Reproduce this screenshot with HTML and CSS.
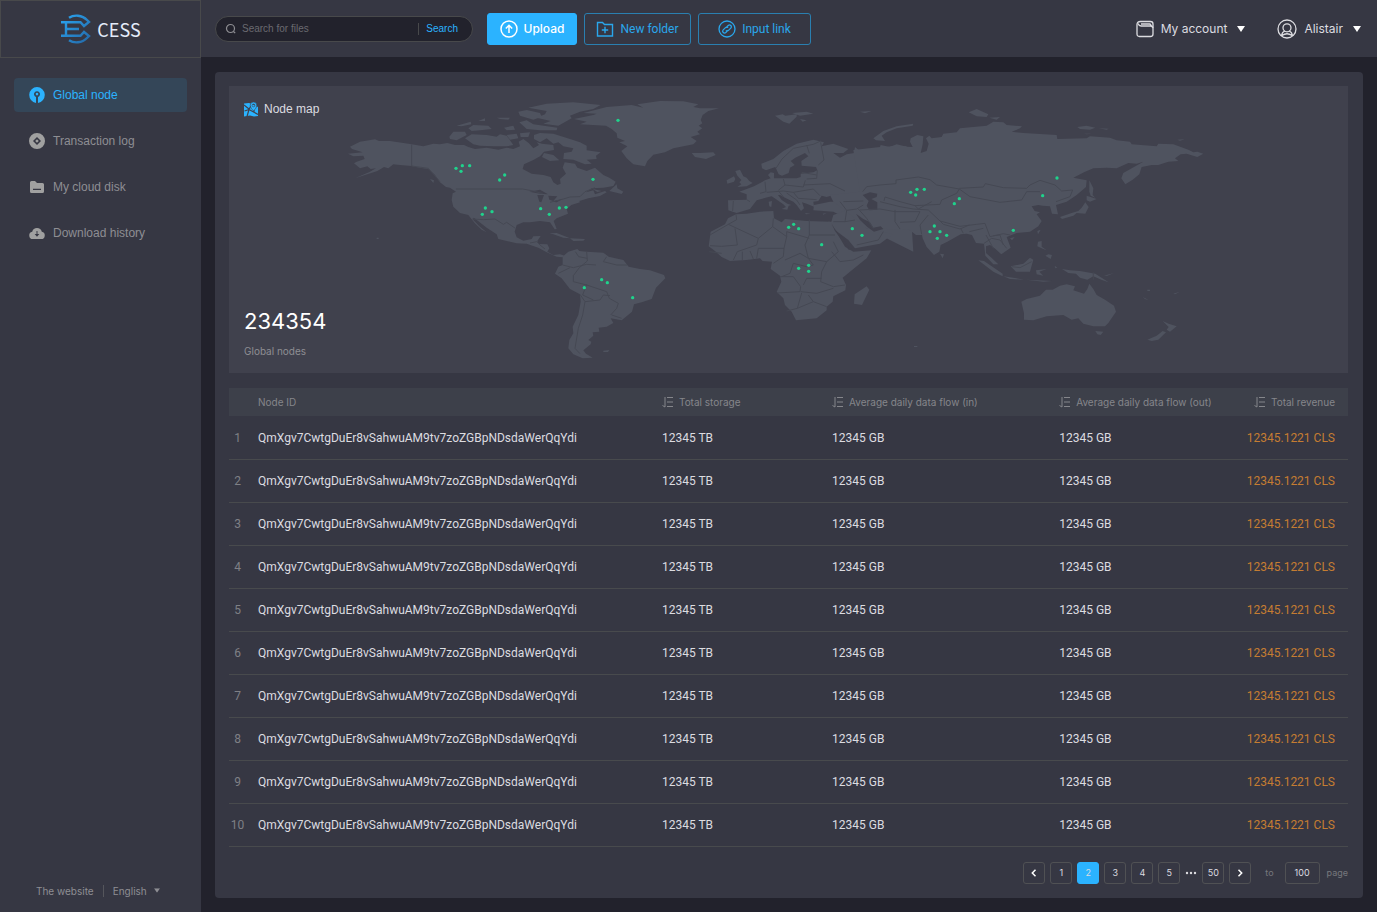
FILE: index.html
```html
<!DOCTYPE html>
<html lang="en">
<head>
<meta charset="utf-8">
<meta name="viewport" content="width=device-width, initial-scale=1">
<title>CESS</title>
<link rel="stylesheet" href="styles.css">
</head>
<body>
<svg class="defs" aria-hidden="true">
  <symbol id="sort" viewBox="0 0 12 12"><path d="M3 1v10L.5 9.500M5 1.500h6M5 6h6M5 10.500h6" fill="none" stroke="currentColor"/></symbol>
  <symbol id="caret" viewBox="0 0 8 6"><path d="M0 0h8L4 6z" fill="currentColor"/></symbol>
  <linearGradient id="logo-fill" x1="0" y1="0" x2="1" y2="1"><stop offset="0" stop-color="#2aa6f2"/><stop offset="1" stop-color="#2469a8"/></linearGradient>
</svg>
<div class="app">
  <aside class="sidebar">
    <a class="brand" href="#">
      <svg class="brand-logo" viewBox="0 0 31 30" aria-hidden="true"><g fill="none" stroke="url(#logo-fill)" stroke-width="2.400"><path d="M9 3.800C14 .5 22 .8 27 6l2 2-5 4-3.500-3.700H1M9 26.200c5 3.300 13 3 18-2.200l2-2-5-4-3.500 3.700H1M6 8v14M6 15h13"/></g></svg>
      <span>CESS</span>
    </a>
    <nav class="nav">
      <a class="nav-item active" href="#"><svg viewBox="0 0 16 16"><path fill="currentColor" fill-rule="evenodd" d="M8 0a8 8 0 0 1 1 15.900V10a3 3 0 1 0-2 0v5.900A8 8 0 0 1 8 0zM8 5.800a1.300 1.300 0 1 1 0 2.600 1.300 1.300 0 0 1 0-2.600z"/></svg>Global node</a>
      <a class="nav-item" href="#"><svg viewBox="0 0 16 16"><path fill="currentColor" fill-rule="evenodd" d="M8 0a8 8 0 1 1 0 16A8 8 0 0 1 8 0zM8 4L4 8l4 4 4-4zM8 6.200L9.800 8 8 9.800 6.200 8z"/></svg>Transaction log</a>
      <a class="nav-item" href="#"><svg viewBox="0 0 16 16"><path fill="currentColor" fill-rule="evenodd" d="M2.500 2H6l2 2h5.500Q15 4 15 5.500v7q0 1.500-1.500 1.500h-11Q1 14 1 12.500v-9Q1 2 2.500 2zM4 9.800V11h8V9.800z"/></svg>My cloud disk</a>
      <a class="nav-item" href="#"><svg viewBox="0 0 17 14"><path fill="currentColor" fill-rule="evenodd" d="M4 13.500a4 4 0 0 1-.6-7.900 5.300 5.300 0 0 1 10.200 0 4 4 0 0 1-.6 7.900zM8 5v3H6l2.500 3L11 8H9V5z"/></svg>Download history</a>
    </nav>
    <div class="side-foot">
      <a href="#">The website</a>
      <span class="rule"></span>
      <label class="lang"><select aria-label="Language"><option>English</option></select><svg viewBox="0 0 8 6"><use href="#caret"/></svg></label>
    </div>
  </aside>

  <header class="topbar">
    <form class="search">
      <svg viewBox="0 0 12 12"><g fill="none" stroke="currentColor" stroke-width="1.200"><circle cx="5.500" cy="5.500" r="4"/><path d="M8.500 8.500l1.700 1.700"/></g></svg>
      <input type="search" placeholder="Search for files" aria-label="Search for files">
      <button type="button">Search</button>
    </form>
    <div class="actions">
      <button class="btn primary"><svg viewBox="0 0 18 18"><g fill="none" stroke="currentColor" stroke-width="1.500"><circle cx="9" cy="9" r="8"/><path d="M9 13V5.500M5.800 8.500L9 5.300l3.200 3.200"/></g></svg>Upload</button>
      <button class="btn folder"><svg viewBox="0 0 18 18"><g fill="none" stroke="currentColor" stroke-width="1.400"><path d="M1.500 2.500h5l2 2h8v11.500h-15zM9 6.800v6.400M5.800 10h6.400"/></g></svg>New folder</button>
      <button class="btn link"><svg viewBox="0 0 18 18"><g fill="none" stroke="currentColor" stroke-width="1.300"><circle cx="9" cy="9" r="8"/><path d="M8 7.800l2.200-2.300a1.800 1.800 0 0 1 2.600 2.600l-2.300 2.300a1.800 1.800 0 0 1-2.600 0M10 10.200l-2.200 2.300a1.800 1.800 0 0 1-2.600-2.600l2.300-2.300a1.800 1.800 0 0 1 2.600 0"/></g></svg>Input link</button>
    </div>
    <div class="account">
      <button class="menu"><svg class="wallet" viewBox="0 0 18 18"><g fill="none" stroke="currentColor" stroke-width="1.300"><path d="M4.500 1.500h10Q17 1.500 17 4v10q0 2.500-2.500 2.500h-11Q1 16.500 1 14V4.500Q1 1.500 4.500 1.500z"/><path d="M2 3.500Q3 6 5 6h9.500q2 0 2.500 2M5 4h9l1.500 2" /></g></svg>My account<svg class="caret" viewBox="0 0 8 6"><use href="#caret"/></svg></button>
      <button class="menu"><svg class="user" viewBox="0 0 20 20"><g fill="none" stroke="currentColor" stroke-width="1.300"><circle cx="10" cy="10" r="9"/><circle cx="10" cy="8.800" r="4"/><path d="M4.500 17c.3-2.500 1.600-4.400 3.400-4.900M15.500 17c-.3-2.500-1.600-4.400-3.400-4.900M5 16.500q5-3.500 10 0"/></g></svg>Alistair<svg class="caret" viewBox="0 0 8 6"><use href="#caret"/></svg></button>
    </div>
  </header>

  <main class="main">
    <div class="panel">
      <section class="map-card">
        <svg class="map" viewBox="0 0 1119 287" aria-hidden="true">
          <g transform="translate(111 -1) scale(.33333)">
            <g class="land">
              <path d="M30 185L60 170 105 163 117 168 150 168 215 178 250 184 280 176 300 178 322 174 345 180 372 180 385 186 405 192 440 188 475 194 500 188 520 192 540 184 536 170 550 162 566 174 580 190 597 180 590 172 606 176 640 180 642 195 612 200 600 214 580 225 552 238 548 252 575 266 610 270 632 276 640 292 652 300 662 296 660 282 678 266 668 248 674 232 705 236 712 248 740 258 765 248 790 270 808 278 827 290 820 303 790 308 755 310 738 322 760 316 765 328 795 318 800 322 780 333 745 340 718 348 720 352 694 360 680 372 684 386 650 400 641 408 650 432 644 433 630 412 600 408 570 412 550 412 530 420 524 440 530 457 550 467 575 462 580 454 602 453 592 468 595 477 622 478 628 490 622 500 640 510 660 508 674 512 668 517 650 515 620 502 595 488 560 476 530 475 475 462 470 448 440 428 402 398 397 402 418 424 440 442 425 434 404 414 385 390 360 384 340 365 335 345 338 325 348 320 330 308 318 306 300 292 285 270 265 252 240 248 215 243 180 240 160 238 145 250 132 246 112 258 45 280 90 260 108 250 92 252 82 244 60 250 42 235 50 230 74 222 70 212 40 214 24 206 68 202 36 192Z"/>
              <path d="M328 155L340 140 375 140 380 150 350 166 330 162ZM350 122L392 110 394 118 365 124ZM375 160L395 148 440 150 470 155 480 148 500 152 520 180 500 184 460 184 420 182 400 178ZM385 130L400 120 445 122 455 132 420 136 395 138ZM470 98L510 98 505 104 480 102ZM492 128L520 122 525 134 500 136ZM500 150L530 146 535 160 510 164ZM415 108L435 100 435 108ZM535 80L560 75 600 84 605 95 580 104 540 92ZM565 68L620 56 700 52 782 60 760 72 720 80 690 92 695 100 655 122 610 116 632 108 590 98 615 88 620 78ZM538 112L560 106 580 118 652 128 650 136 600 136 560 132ZM540 145L570 142 565 156 542 156ZM582 150L600 144 640 146 690 162 720 172 740 182 740 196 782 202 768 212 770 222 740 224 755 236 735 238 700 224 670 222 672 204 695 200 700 190 670 184 655 172 640 176 620 160 600 172 582 162ZM612 204L640 210 658 226 630 228 606 216ZM808 318L830 298 832 310 850 320 845 327ZM758 312L785 318 772 321ZM270 282L282 286 280 294ZM628 445L650 444 690 460 670 458 640 448ZM690 460L735 462 730 467 700 468ZM110 458h6v4h-6ZM790 797L808 795 804 801 790 801Z"/>
              <path d="M668 540L668 515 685 500 712 492 718 498 740 500 790 503 806 515 850 525 866 545 900 552 930 556 972 570 976 580 948 608 935 642 905 652 882 658 876 680 845 706 812 700 820 714 800 725 776 728 778 740 758 742 760 752 745 765 754 770 752 778 730 796 738 806 758 818 728 820 700 808 685 790 688 765 700 745 698 725 715 690 722 650 720 628 690 612 665 580 645 566 655 545Z"/>
            </g>
            <g class="land" transform="translate(780)">
              <path d="M-78 102L-20 90 -10 86 -50 84 20 66 95 60 130 68 112 58 180 48 250 49 295 58 280 66 300 70 357 70 325 78 308 90 302 105 307 115 296 122 307 130 292 140 300 148 272 156 290 168 280 178 220 190 195 202 160 209 142 228 135 244 100 238 80 220 64 198 82 184 58 172 75 168 52 158 50 145 35 132 18 122 -60 118 -40 110ZM275 204L300 204 340 202 347 210 318 222 285 216ZM525 92L548 88 556 92 590 88 590 95 568 116 550 110ZM576 84L620 80 640 86 600 92ZM780 80L815 78 795 85ZM600 102L620 106 608 110Z"/>
              <path d="M406 258L420 254 430 274 440 278 448 288 458 294 440 304 412 306 424 298 418 292 424 285 412 272ZM380 286L402 274 406 282 402 290 382 296Z"/>
              <path d="M484 236L520 222 550 198 590 176 640 164 672 172 665 184 700 176 745 192 730 204 700 204 720 218 740 208 762 204 765 186 782 200 840 190 880 182 920 184 940 500 780 420 700 380 640 376 642 360 690 350 720 350 720 344 696 332 706 320 735 318 700 330 680 336 665 332 655 348 640 350 642 365 620 356 606 352 612 370 603 378 590 360 580 350 555 338 540 330 534 330 545 345 562 356 574 360 566 362 562 374 545 372 558 366 550 358 524 340 515 334 505 336 470 346 450 372 410 384 398 380 385 376 384 346 440 344 440 328 418 320 440 312 462 304 495 286 512 280 504 270 512 262 522 264 522 280 550 280 590 280 602 276 602 266 640 262 652 256 648 246 605 242 604 228 625 214 615 204 586 218 572 228 584 240 570 248 566 264 546 272 536 268 526 246 498 256 486 250Z"/>
              <path d="M506 350L516 348 514 366 508 364ZM615 384L632 386 618 388ZM668 386L680 384 670 389Z"/>
              <path d="M408 388L440 386 480 380 520 378 522 400 545 412 555 402 620 408 690 410 720 460 735 485 760 500 814 496 800 520 760 552 728 578 738 600 736 616 700 634 698 650 680 665 680 676 650 700 588 706 575 680 555 660 550 640 530 620 544 590 540 572 512 552 516 530 488 528 480 520 440 525 390 528 365 516 345 498 326 484 332 440 375 418 384 400Z"/>
              <path d="M800 604L808 614 786 660 762 656 764 628ZM684 410L694 410 700 390 740 376 800 430 850 440 878 448 840 476 765 490 745 465 712 440Z"/>
            </g>
            <g class="land" transform="translate(1560)">
              <path d="M-20 195L60 186 62 180 90 186 110 178 140 185 158 186 150 170 152 160 172 150 190 154 188 178 182 204 200 198 206 176 198 160 208 152 215 160 245 156 250 146 290 142 300 130 380 122 400 110 430 112 440 120 486 124 480 130 455 140 490 144 590 150 592 162 680 160 690 154 750 158 770 166 810 170 815 178 890 184 895 176 940 178 985 194 1000 202 1012 200 1030 206 1012 216 980 206 962 208 945 220 955 228 925 230 895 240 875 240 845 246 838 268 818 284 796 298 784 280 790 264 850 230 830 236 805 234 770 250 740 248 700 250 672 262 640 278 680 286 678 306 650 330 620 350 588 360 594 388 576 386 570 364 548 362 535 360 515 364 524 378 540 382 530 388 545 408 535 424 510 440 470 444 440 456 452 488 424 508 404 490 390 480 378 484 378 504 396 520 415 538 400 538 376 512 372 476 348 474 336 450 320 446 302 448 262 470 242 480 238 500 222 510 200 486 188 460 186 450 168 450 148 434 80 432 60 428 40 425 0 410 -80 350 -90 330 0 320Z"/>
              <path d="M326 82L350 72 385 88 380 96 350 94ZM388 98L420 96 410 104ZM40 160L70 138 110 124 160 116 158 122 110 130 80 142 65 152 75 168 48 166ZM652 126L680 122 706 128 690 134 660 132ZM716 130L746 131 740 134ZM672 146L696 146 680 148ZM952 164L974 163 960 167ZM688 286L700 310 698 330 706 338 692 332 688 320ZM680 332L710 342 690 350 680 346ZM676 352L686 366 676 386 650 384 640 392 606 402 600 396 635 384 655 378 665 368ZM532 438L542 434 534 448ZM450 460L464 456 456 466ZM240 506L252 508 248 520ZM534 470L545 468 545 485 560 496 550 492 532 484ZM565 508L576 510 572 522 556 512ZM355 526L372 528 428 566 428 574 400 560ZM430 574L460 578 492 584 450 582ZM452 544L490 536 510 518 520 524 510 560 468 560ZM528 556L560 552 538 560 550 572 530 568ZM498 584L575 588 550 590ZM584 542L592 548 586 550ZM606 552L630 556 660 558 706 566 746 592 724 584 700 574 682 584 660 578 648 566 625 564ZM732 572L762 564 742 572ZM848 636L866 645 855 642ZM940 626L960 620 945 628ZM862 614h8v4h-8ZM162 783h10v3h-10Z"/>
              <path d="M484 650L500 642 540 632 558 614 578 614 600 602 620 598 645 604 640 616 672 626 682 612 688 596 700 612 710 630 735 644 762 662 768 680 745 714 735 724 700 724 670 716 655 700 635 704 610 690 560 694 520 706 492 704 492 684ZM706 738L730 740 722 750 712 748ZM908 708L926 716 950 724 930 740 920 734 926 726ZM862 764L890 752 908 738 918 742 895 764 875 768Z"/>
            </g>
            <path class="water" d="M1568 330L1590 322 1612 326 1610 336 1594 342 1612 352 1612 374 1588 376 1580 362 1586 348ZM1548 386L1570 402 1590 412 1600 428 1622 424 1630 432 1602 440 1582 426 1560 405ZM592 330L612 330 604 352 598 350ZM568 320L600 314 624 328 600 326ZM625 332L652 334 640 348 628 344ZM635 350L668 342 650 352ZM1474 414L1490 442 1510 460 1522 484 1538 494 1526 494 1506 466 1485 438Z"/>
            <path class="borders" d="M215 178V243L265 250 300 290M348 312H548L580 318 608 326M630 352L670 342 690 336 720 335 735 320 765 308M398 402L430 404 465 402 490 418 500 412 526 430M570 474L590 470 600 480 615 492M740 500L742 528 718 548 700 572 700 590 740 600 800 620 808 640 835 655 830 670 812 690M668 540L700 548 740 538 768 540M800 515L790 530 830 540 862 540M655 565L690 548M720 628L735 650 728 690 715 730 705 790 720 806M735 650L780 645 790 630 810 632M740 598L728 630 760 645M815 690L845 700M706 500L716 515 742 520"/>
            <g class="borders" transform="translate(780)"><path d="M546 222L528 250M546 222L580 190 640 178 662 168M620 180L628 205M662 172L672 225 655 240M550 282L555 300 535 316M495 290L498 320 480 325M440 344L450 350M400 348L398 378M555 300L610 306 616 286M610 300L690 296 735 318M652 256L650 280 620 282M500 322L550 318 580 322 640 312 660 332M535 318L550 335M560 324L590 345 600 360M580 322L595 340 650 344M605 262L650 270M408 388L410 404 385 418 330 450M385 418L475 460 518 425 520 400M405 430L412 480 365 484 330 482M475 460L470 480 412 500 400 525M518 425L560 455 560 440 628 460M628 404V450H705M560 455L552 490 475 490 470 520M552 490L550 515 520 535M628 450L615 480 625 520 600 505 555 525M625 520L680 530 715 500 700 470M625 520L640 540 620 545 580 535 570 565 545 575M680 530L665 560 662 590 700 605 735 600M540 575H580L602 605 600 620 532 624M602 620L650 625 700 610M605 624L592 670 560 678M592 670L640 650 680 665M640 650L625 630M665 580L620 580 610 600M427 500V525M450 498L460 522M328 500L365 505M720 350L740 376 770 372 790 360M775 372L800 400 820 430M740 376L735 410 700 410M735 410L765 405M770 480L835 465 850 440M695 500L720 530 760 525 790 510M730 350L790 348"/></g>
            <g class="borders" transform="translate(1560)"><path d="M8 320L20 305 60 300 108 296 108 285 175 276 210 284 230 300 298 312 290 325 245 345 240 358 165 362 120 350 75 336 72 348M298 310L370 306 376 296 430 308 500 310 510 300 540 286 585 300 605 318 638 315 630 335 588 350M298 312L330 335 420 352 485 345 500 320 540 320M60 350L120 365 160 372 205 375 240 408 300 424 350 418 375 415 390 455 430 446 450 450M105 375L105 410 120 432M105 380L180 380 165 410 120 412M205 390L180 420 185 448M240 408L250 418 300 432 328 420M302 430L310 445M328 440L370 430M372 475L395 460 420 465 440 490M378 450L400 490M700 562V584M455 545L480 548 515 530M400 452L420 450 430 480M165 362L175 372 215 350M0 375L60 372 105 380"/></g>
            <g class="nodes">
              <circle cx="348" cy="250" r="5"/><circle cx="367" cy="242" r="5"/><circle cx="389" cy="242" r="5"/><circle cx="363" cy="259" r="5"/><circle cx="479" cy="285" r="5"/><circle cx="494" cy="270" r="5"/><circle cx="759" cy="283" r="5"/><circle cx="436" cy="369" r="5"/><circle cx="456" cy="380" r="5"/><circle cx="427" cy="388" r="5"/><circle cx="602" cy="371" r="5"/><circle cx="628" cy="388" r="5"/><circle cx="658" cy="369" r="5"/><circle cx="678" cy="367" r="5"/><circle cx="834" cy="106" r="5"/><circle cx="733" cy="608" r="5"/><circle cx="785" cy="584" r="5"/><circle cx="802" cy="593" r="5"/><circle cx="878" cy="638" r="5"/><circle cx="1346" cy="427" r="5"/><circle cx="1361" cy="418" r="5"/><circle cx="1376" cy="431" r="5"/><circle cx="1445" cy="479" r="5"/><circle cx="1376" cy="550" r="5"/><circle cx="1406" cy="541" r="5"/><circle cx="1406" cy="559" r="5"/><circle cx="1537" cy="431" r="5"/><circle cx="1566" cy="451" r="5"/><circle cx="1712" cy="322" r="5"/><circle cx="1731" cy="313" r="5"/><circle cx="1753" cy="313" r="5"/><circle cx="1727" cy="330" r="5"/><circle cx="1858" cy="341" r="5"/><circle cx="1843" cy="356" r="5"/><circle cx="1783" cy="423" r="5"/><circle cx="1770" cy="440" r="5"/><circle cx="1800" cy="440" r="5"/><circle cx="1820" cy="451" r="5"/><circle cx="1792" cy="460" r="5"/><circle cx="2020" cy="436" r="5"/><circle cx="2108" cy="332" r="5"/><circle cx="2151" cy="279" r="5"/>
            </g>
          </g>
        </svg>
        <h1 class="map-title"><svg viewBox="0 0 14 15"><path fill="currentColor" d="M0 1.500l5-.5 9 4v9l-4 .5-4-1-6 1z"/><path d="M.5 9L5 7.500l2-4M3 14.500L5 7.500M5 7.500l9 5M10 8v2.500M0 3l5 4" stroke="#40414d" stroke-width="1.200" fill="none"/><path fill="currentColor" stroke="#40414d" stroke-width=".6" fill-rule="evenodd" d="M9.500 0a3.300 3.300 0 0 1 3.300 3.300Q12.800 6 9.500 9 6.200 6 6.200 3.300A3.300 3.300 0 0 1 9.500 0zM9.500 2a1.400 1.400 0 1 0 0 2.800 1.400 1.400 0 0 0 0-2.800z"/></svg>Node map</h1>
        <div class="map-total"><strong>234354</strong><span>Global nodes</span></div>
      </section>

      <table class="nodes-table">
        <colgroup><col class="c-num"><col class="c-id"><col class="c-storage"><col class="c-in"><col class="c-out"><col class="c-rev"></colgroup>
        <thead><tr><th></th><th>Node ID</th><th><button><svg><use href="#sort"/></svg>Total storage</button></th><th><button><svg><use href="#sort"/></svg>Average daily data flow (in)</button></th><th><button><svg><use href="#sort"/></svg>Average daily data flow (out)</button></th><th><button><svg><use href="#sort"/></svg>Total revenue</button></th></tr></thead>
        <tbody>
          <tr><td>1</td><td>QmXgv7CwtgDuEr8vSahwuAM9tv7zoZGBpNDsdaWerQqYdi</td><td>12345 TB</td><td>12345 GB</td><td>12345 GB</td><td>12345.1221 CLS</td></tr>
          <tr><td>2</td><td>QmXgv7CwtgDuEr8vSahwuAM9tv7zoZGBpNDsdaWerQqYdi</td><td>12345 TB</td><td>12345 GB</td><td>12345 GB</td><td>12345.1221 CLS</td></tr>
          <tr><td>3</td><td>QmXgv7CwtgDuEr8vSahwuAM9tv7zoZGBpNDsdaWerQqYdi</td><td>12345 TB</td><td>12345 GB</td><td>12345 GB</td><td>12345.1221 CLS</td></tr>
          <tr><td>4</td><td>QmXgv7CwtgDuEr8vSahwuAM9tv7zoZGBpNDsdaWerQqYdi</td><td>12345 TB</td><td>12345 GB</td><td>12345 GB</td><td>12345.1221 CLS</td></tr>
          <tr><td>5</td><td>QmXgv7CwtgDuEr8vSahwuAM9tv7zoZGBpNDsdaWerQqYdi</td><td>12345 TB</td><td>12345 GB</td><td>12345 GB</td><td>12345.1221 CLS</td></tr>
          <tr><td>6</td><td>QmXgv7CwtgDuEr8vSahwuAM9tv7zoZGBpNDsdaWerQqYdi</td><td>12345 TB</td><td>12345 GB</td><td>12345 GB</td><td>12345.1221 CLS</td></tr>
          <tr><td>7</td><td>QmXgv7CwtgDuEr8vSahwuAM9tv7zoZGBpNDsdaWerQqYdi</td><td>12345 TB</td><td>12345 GB</td><td>12345 GB</td><td>12345.1221 CLS</td></tr>
          <tr><td>8</td><td>QmXgv7CwtgDuEr8vSahwuAM9tv7zoZGBpNDsdaWerQqYdi</td><td>12345 TB</td><td>12345 GB</td><td>12345 GB</td><td>12345.1221 CLS</td></tr>
          <tr><td>9</td><td>QmXgv7CwtgDuEr8vSahwuAM9tv7zoZGBpNDsdaWerQqYdi</td><td>12345 TB</td><td>12345 GB</td><td>12345 GB</td><td>12345.1221 CLS</td></tr>
          <tr><td>10</td><td>QmXgv7CwtgDuEr8vSahwuAM9tv7zoZGBpNDsdaWerQqYdi</td><td>12345 TB</td><td>12345 GB</td><td>12345 GB</td><td>12345.1221 CLS</td></tr>
        </tbody>
      </table>

      <nav class="pager" aria-label="Pages">
        <button aria-label="Previous"><svg viewBox="0 0 8 8"><path d="M5.500 0.800L2.300 4l3.200 3.200"/></svg></button>
        <button>1</button><button class="current" aria-current="page">2</button><button>3</button><button>4</button><button>5</button>
        <svg class="dots" viewBox="0 0 12 4"><circle cx="2" cy="2" r="1.200"/><circle cx="6" cy="2" r="1.200"/><circle cx="10" cy="2" r="1.200"/></svg>
        <button>50</button>
        <button aria-label="Next"><svg viewBox="0 0 8 8"><path d="M2.500 0.800L5.700 4 2.500 7.200"/></svg></button>
        <label class="jump"><span>to</span><input type="text" value="100"><span>page</span></label>
      </nav>
    </div>
  </main>
</div>
</body>
</html>
```
FILE: styles.css
```css
* { box-sizing: border-box; }
body {
  margin: 0;
  background: #22222c;
  color: #dcdce0;
  font: 12px/16px Inter, "Liberation Sans", sans-serif;
}
button, input, select { font: inherit; color: inherit; background: none; border: 0; padding: 0; margin: 0; outline: none; }
button, select { cursor: pointer; }
a { color: inherit; text-decoration: none; }
svg { display: block; flex: none; }
.defs { width: 0; height: 0; position: absolute; }

.app {
  display: grid;
  grid-template: 57px 1fr / 201px minmax(0, 1fr);
  min-height: 100vh;
}

/* Sidebar */
.sidebar { grid-row: 1 / 3; display: flex; flex-direction: column; background: #363743; color: #8e8e93; }
.brand {
  display: flex; align-items: center; justify-content: center; gap: 6px;
  height: 58px; border: 1px solid #48494b;
  color: #e4ecfa; font: 18px/24px "Noto Sans CJK SC", "Noto Sans", sans-serif;
}
.brand-logo { width: 31px; height: 30px; }
.nav { display: flex; flex-direction: column; gap: 12px; padding: 20px 14px; font-family: "Liberation Sans", Arial, sans-serif; }
.nav-item { display: flex; align-items: center; gap: 8px; height: 34px; padding: 0 15px; border-radius: 4px; }
.nav-item svg { width: 16px; height: 16px; color: #a0a0a0; }
.nav-item.active { background: #344658; color: #2bb3ff; }
.nav-item.active svg { color: #2bb3ff; }
.side-foot { display: flex; align-items: center; gap: 9px; margin-top: auto; padding: 0 36px 14px; font-size: 10px; white-space: nowrap; }
.rule { width: 1px; height: 12px; background: #55565c; }
.lang { display: flex; align-items: center; gap: 6px; }
.lang select { appearance: none; }
.lang svg { width: 6px; height: 5px; }

/* Top bar */
.topbar { display: flex; align-items: center; padding: 0 16px 0 14px; background: #363743; }
.search {
  display: flex; align-items: center; gap: 5px;
  width: 258px; height: 26px; padding: 0 14px 0 9px;
  border: 1px solid #48494b; border-radius: 13px;
  background: #22222c; color: #8e8e93; font: 10px/16px "Liberation Sans", Arial, sans-serif;
}
.search svg { width: 12px; height: 12px; }
.search input { flex: 1; min-width: 0; }
.search input::placeholder { color: #6a6a70; opacity: 1; }
.search button { padding-left: 7px; border-left: 1px solid #48494b; color: #2bb3ff; line-height: 12px; }
.actions { display: flex; gap: 7px; margin-left: 14px; }
.btn {
  display: flex; align-items: center; justify-content: center; gap: 6px;
  height: 32px; border: 1px solid #2a7fb0; border-radius: 3px; color: #2aa7ec; white-space: nowrap;
}
.btn svg { width: 18px; height: 18px; }
.btn.primary { width: 90px; background: #2bb3ff; border-color: #2bb3ff; color: #fff; font-weight: 500; }
.btn.folder { width: 107px; font-family: Roboto, sans-serif; }
.btn.link { width: 113px; font-family: Roboto, sans-serif; }
.account { display: flex; gap: 32px; margin-left: auto; }
.menu { display: flex; align-items: center; white-space: nowrap; }
.wallet { width: 18px; height: 18px; margin-right: 7px; }
.user { width: 20px; height: 20px; margin-right: 7px; }
.caret { width: 8px; height: 6px; margin-left: 10px; color: #fff; }

/* Content */
.main { padding: 15px 14px; }
.panel { padding: 14px 15px 14px 14px; border-radius: 4px; background: #363743; }
.map-card {
  position: relative; display: flex; flex-direction: column; justify-content: space-between;
  min-height: 287px; padding: 15px 15px 14px; background: #40414d;
}
.map { position: absolute; inset: 0; width: 100%; height: 100%; }
.land { fill: #4f535f; }
.water { fill: #40414d; }
.borders { fill: none; stroke: #454853; stroke-width: 3; stroke-linejoin: round; }
.nodes { fill: #1fd38c; }
.map-title { position: relative; display: flex; align-items: center; gap: 6px; margin: 0; font: 12px/16px "Liberation Sans", Arial, sans-serif; }
.map-title svg { width: 14px; height: 15px; color: #2bb3ff; }
.map-total { position: relative; display: flex; flex-direction: column; gap: 8px; }
.map-total strong { color: #fff; font-size: 22px; font-weight: 400; line-height: 28px; }
.map-total span { color: #8e8e93; font-size: 10px; }

.nodes-table { width: 100%; margin-top: 15px; table-layout: fixed; border-collapse: collapse; text-align: left; white-space: nowrap; }
.c-num { width: 29px; }
.c-id { width: 36.1%; }
.c-storage { width: 15.2%; }
.c-in { width: 20.3%; }
.c-out { width: 14%; }
.nodes-table th { height: 28px; padding: 0; background: #3d404a; color: #85868b; font-size: 10px; font-weight: 400; }
.nodes-table th button { display: flex; align-items: center; gap: 5px; }
.nodes-table th:last-child button { margin-left: auto; }
.nodes-table th svg { width: 12px; height: 12px; }
.nodes-table td { height: 43px; padding: 1px 0 0; border-bottom: 1px solid #484a4d; font-family: Roboto, sans-serif; }
.nodes-table td:first-child { padding-right: 12px; color: #7f8086; text-align: center; }
.nodes-table th:last-child, .nodes-table td:last-child { padding-right: 13px; text-align: right; }
.nodes-table td:last-child { color: #c57d32; }

.pager { display: flex; align-items: center; justify-content: flex-end; gap: 5px; margin-top: 15px; font-size: 9px; }
.pager button { display: flex; align-items: center; justify-content: center; width: 22px; height: 22px; border: 1px solid #505154; border-radius: 3px; }
.pager button svg { width: 8px; height: 8px; fill: none; stroke: #fff; stroke-width: 1.5; }
.pager .current { background: #2bb3ff; border-color: #2bb3ff; }
.dots { width: 12px; height: 4px; fill: #dcdce0; }
.jump { display: flex; align-items: center; color: #77787d; }
.jump input { width: 35px; height: 22px; margin: 0 7px 0 11px; border: 1px solid #505154; border-radius: 3px; color: #dcdce0; text-align: center; }
.jump span:first-child { margin-left: 9px; }
```
